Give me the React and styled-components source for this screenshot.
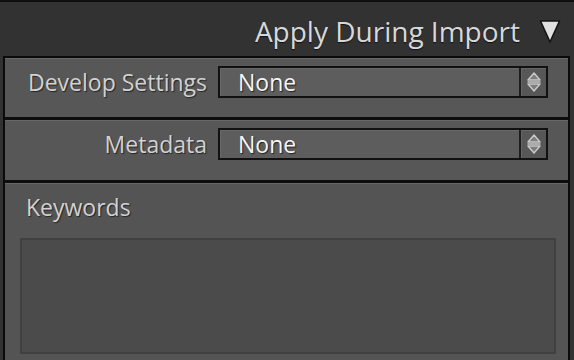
import React from "react";
import styled, { createGlobalStyle } from "styled-components";

const Global = createGlobalStyle`
  html, body { margin: 0; padding: 0; background: #323232; }
  body { font-family: "Open Sans", "Noto Sans", sans-serif; }
  * { box-sizing: border-box; }
`;

const Page = styled.div`
  width: 574px;
  height: 360px;
  overflow: hidden;
  display: flex;
  flex-direction: column;
  background: #323232;
  border-top: 2px solid #0e0e0e;
`;

const Header = styled.div`
  height: 54px;
  flex: none;
  display: flex;
  justify-content: flex-end;
  align-items: flex-start;
  padding: 15px 13px 0 0;
  gap: 19px;
`;

const Title = styled.div`
  font-size: 28px;
  line-height: 28px;
  color: #d8d8d8;
  text-shadow: 0 1px 1px #111;
`;

const Toggle = styled.svg`
  display: block;
  margin-top: 2px;
  flex: none;
  width: 22px;
  height: 25px;
`;

const Panel = styled.div`
  flex: 1;
  margin: 0 4px 0 3px;
  border: 2px solid #0b0b0b;
  border-bottom: none;
  display: flex;
  flex-direction: column;
`;

const Section = styled.div`
  background: ${(p) => p.$bg || "#575757"};
  box-shadow: inset 0 1px 0 #676767;
  border-bottom: ${(p) => (p.$last ? "none" : "3px solid #0d0d0d")};
  padding: ${(p) => p.$pad};
  ${(p) => (p.$last ? "flex: 1;" : "")}
`;

const Row = styled.div`
  display: grid;
  grid-template-columns: 202px 330px;
  column-gap: 11px;
  align-items: center;
`;

const Label = styled.div`
  font-size: 23px;
  line-height: 32px;
  color: #d2d2d2;
  text-shadow: 1px 1px 1px #262626;
  text-align: ${(p) => (p.$left ? "left" : "right")};
  white-space: nowrap;
`;

const Select = styled.div`
  height: 32px;
  border: 2px solid #111;
  display: flex;
  background: #5d5d5d;
`;

const Value = styled.div`
  flex: 1;
  padding-left: 18px;
  font-size: 23px;
  line-height: 28px;
  color: #f5f5f5;
  text-shadow: 1px 1px 1px #222;
  box-shadow: inset 1px 1px 0 #696969;
`;

const Stepper = styled.div`
  width: 27px;
  flex: none;
  border-left: 2px solid #1c1c1c;
  background: #575757;
  box-shadow: inset 1px 1px 0 #656565;
  display: flex;
  align-items: center;
  justify-content: center;
`;

const StepSvg = styled.svg`
  display: block;
  width: 14px;
  height: 22px;
`;

const Keywords = styled.div`
  margin: 0 0 15px 6px;
`;

const TextBox = styled.div`
  height: 116px;
  border: 2px solid #404040;
  background: #4b4b4b;
`;

const Bottom = styled.div`
  height: 2px;
`;

function StepIcon() {
  return (
    <StepSvg viewBox="0 0 14 22">
      <polygon points="7,2 13,9 1,9" fill="#7d7d7d" stroke="#c8c8c8" strokeWidth="1.5" strokeLinejoin="round" />
      <line x1="0.5" y1="11" x2="13.5" y2="11" stroke="#c8c8c8" strokeWidth="1.5" />
      <polygon points="1,13 13,13 7,20" fill="#7d7d7d" stroke="#c8c8c8" strokeWidth="1.5" strokeLinejoin="round" />
    </StepSvg>
  );
}

function SelectRow({ label, value }) {
  return (
    <Row>
      <Label>{label}</Label>
      <Select>
        <Value>{value}</Value>
        <Stepper>
          <StepIcon />
        </Stepper>
      </Select>
    </Row>
  );
}

export default function App() {
  return (
    <>
      <Global />
      <Page>
        <Header>
          <Title>Apply During Import</Title>
          <Toggle viewBox="0 0 22 25">
            <polygon points="1.5,2 20.5,2 11,23" fill="#e0e0e0" stroke="#141414" strokeWidth="1.6" strokeLinejoin="round" />
          </Toggle>
        </Header>
        <Panel>
          <Section $pad="8px 0 19px">
            <SelectRow label="Develop Settings" value="None" />
          </Section>
          <Section $pad="8px 0 20px">
            <SelectRow label="Metadata" value="None" />
          </Section>
          <Section $last $bg="#545454" $pad="8px 12px 0 15px">
            <Keywords>
              <Label $left>Keywords</Label>
            </Keywords>
            <TextBox />
            <Bottom />
          </Section>
        </Panel>
      </Page>
    </>
  );
}
